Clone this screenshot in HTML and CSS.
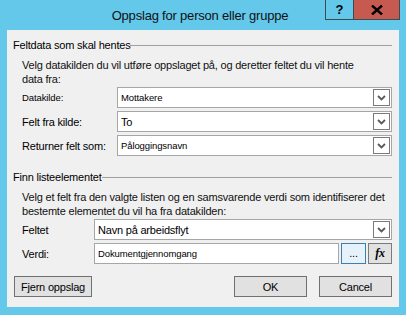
FILE: index.html
```html
<!DOCTYPE html>
<html lang="no">
<head>
    <meta charset="UTF-8">
    <title>Oppslag for person eller gruppe</title>
    <link rel="stylesheet" href="styles.css">
</head>
<body>
    <div class="vindu">
        <div class="tittellinje">
            <div class="tittel">Oppslag for person eller gruppe</div>
            <div class="knapper">
                <div class="hjelp">?</div>
                <div class="lukk">
                    <svg width="12" height="10" viewBox="0 0 12 10"><path d="M1 0.5 L11 9.5 M11 0.5 L1 9.5" stroke="#000" stroke-width="2.4"/></svg>
                </div>
            </div>
        </div>

        <div class="klient">
            <div class="gruppe-tittel">Feltdata som skal hentes</div>
            <div class="gruppe">
                <div class="beskrivelse">Velg datakilden du vil utføre oppslaget på, og deretter feltet du vil hente<br>data fra:</div>
                <div class="rad">
                    <div class="etikett liten">Datakilde:</div>
                    <div class="kombo kilde">
                        <span class="verdi liten">Mottakere</span>
                        <span class="pil"><svg width="9" height="6" viewBox="0 0 9 6"><path d="M1 1 L4.5 4.5 L8 1" fill="none" stroke="#5a5a5a" stroke-width="1.8"/></svg></span>
                    </div>
                </div>
                <div class="rad">
                    <div class="etikett">Felt fra kilde:</div>
                    <div class="kombo kilde">
                        <span class="verdi">To</span>
                        <span class="pil"><svg width="9" height="6" viewBox="0 0 9 6"><path d="M1 1 L4.5 4.5 L8 1" fill="none" stroke="#5a5a5a" stroke-width="1.8"/></svg></span>
                    </div>
                </div>
                <div class="rad">
                    <div class="etikett">Returner felt som:</div>
                    <div class="kombo kilde">
                        <span class="verdi liten">Påloggingsnavn</span>
                        <span class="pil"><svg width="9" height="6" viewBox="0 0 9 6"><path d="M1 1 L4.5 4.5 L8 1" fill="none" stroke="#5a5a5a" stroke-width="1.8"/></svg></span>
                    </div>
                </div>
            </div>

            <div class="gruppe-tittel andre">Finn listeelementet</div>
            <div class="gruppe">
                <div class="beskrivelse">Velg et felt fra den valgte listen og en samsvarende verdi som identifiserer det<br>bestemte elementet du vil ha fra datakilden:</div>
                <div class="rad smal">
                    <div class="etikett">Feltet</div>
                    <div class="kombo">
                        <span class="verdi">Navn på arbeidsflyt</span>
                        <span class="pil"><svg width="9" height="6" viewBox="0 0 9 6"><path d="M1 1 L4.5 4.5 L8 1" fill="none" stroke="#5a5a5a" stroke-width="1.8"/></svg></span>
                    </div>
                </div>
                <div class="rad smal">
                    <div class="etikett">Verdi:</div>
                    <div class="felt liten">Dokumentgjennomgang</div>
                    <div class="liten-knapp aktiv">...</div>
                    <div class="liten-knapp fx">fx</div>
                </div>
            </div>

            <div class="bunn">
                <button class="knapp fjern">Fjern oppslag</button>
                <div class="hoyre">
                    <button class="knapp">OK</button>
                    <button class="knapp">Cancel</button>
                </div>
            </div>
        </div>
    </div>
</body>
</html>
```

FILE: styles.css
```css
body {
    margin: 0;
    background-color: #63c8ea;
    font-family: "Liberation Sans", Arial, sans-serif;
    color: #000;
}

.vindu {
    width: 406px;
    height: 315px;
    display: flex;
    flex-direction: column;
}

.tittellinje {
    height: 30px;
    position: relative;
}

.tittel {
    text-align: center;
    font-size: 13px;
    letter-spacing: -0.2px;
    line-height: 32px;
    padding-right: 6px;
    color: #111;
}

.knapper {
    position: absolute;
    top: 0;
    right: 6px;
    display: flex;
}

.hjelp {
    width: 27px;
    height: 19px;
    border: 1px solid #3d4a52;
    border-top: none;
    font-weight: bold;
    font-size: 13px;
    line-height: 19px;
    text-align: center;
}

.lukk {
    width: 45px;
    height: 19px;
    border: 1px solid #3d4a52;
    border-top: none;
    border-left: none;
    background-color: #c75a50;
    display: flex;
    align-items: center;
    justify-content: center;
}

.klient {
    background-color: #f0f0f0;
    margin: 0 7px;
    height: 277px;
    padding: 8px 7px 0 6px;
    box-sizing: border-box;
    font-size: 11px;
    letter-spacing: -0.2px;
}

.gruppe-tittel {
    display: flex;
    align-items: center;
    height: 14px;
    line-height: 14px;
    white-space: nowrap;
}

.gruppe-tittel::after {
    content: "";
    flex: 1;
    border-top: 1px solid #a0a0a0;
    margin-top: 1px;
}

.gruppe-tittel.andre {
    margin-top: 14px;
}

.gruppe {
    padding-left: 9px;
}

.beskrivelse {
    margin-top: 6px;
    line-height: 14px;
    color: #111;
    white-space: nowrap;
}

.rad {
    display: flex;
    align-items: center;
    height: 21px;
    margin-top: 3px;
}

.beskrivelse + .rad {
    margin-top: 1px;
}

.etikett {
    width: 95px;
    white-space: nowrap;
}

.rad.smal .etikett {
    width: 72px;
}

.liten {
    font-size: 9.5px;
    letter-spacing: -0.1px;
}

.kombo {
    flex: 1;
    height: 21px;
    box-sizing: border-box;
    background-color: #fff;
    border: 1px solid #a6a6a6;
    display: flex;
    align-items: center;
    padding-left: 3px;
    padding-right: 1px;
}

.verdi {
    flex: 1;
}

.pil {
    width: 15px;
    height: 15px;
    border: 1px solid #7a7a7a;
    background-color: #fff;
    display: flex;
    align-items: center;
    justify-content: center;
}

.felt {
    width: 245px;
    height: 21px;
    box-sizing: border-box;
    background-color: #fff;
    border: 1px solid #a6a6a6;
    padding-left: 3px;
    line-height: 20px;
    margin-right: 2px;
}

.liten-knapp {
    width: 25px;
    height: 21px;
    box-sizing: border-box;
    border: 1px solid #7a7a7a;
    background-color: #e1e1e1;
    text-align: center;
    line-height: 19px;
    margin-right: 2px;
}

.liten-knapp.aktiv {
    border-color: #3c7fb1;
    background-color: #e5f1fb;
}

.liten-knapp.fx {
    width: 24px;
    margin-right: 0;
    font-family: "Liberation Serif", serif;
    font-style: italic;
    font-weight: bold;
    font-size: 12px;
}

.bunn {
    display: flex;
    justify-content: space-between;
    margin-top: 12px;
    padding-left: 1px;
}

.hoyre {
    display: flex;
    gap: 12px;
}

.knapp {
    height: 21px;
    width: 73px;
    border: 1px solid #707070;
    background-color: #e1e1e1;
    font-family: "Liberation Sans", Arial, sans-serif;
    font-size: 11px;
    letter-spacing: -0.2px;
    padding: 0;
    color: #000;
}

.knapp.fjern {
    width: 78px;
}
```
